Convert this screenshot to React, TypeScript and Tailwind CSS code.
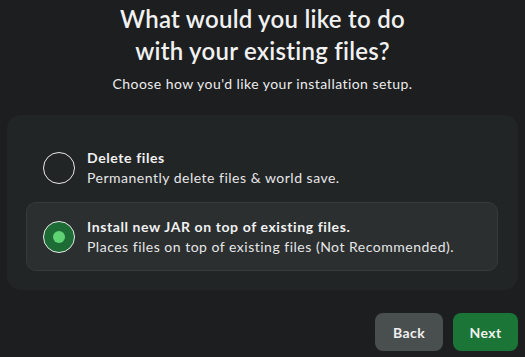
import React from 'react';

const options = [
  {
    id: 'delete',
    title: 'Delete files',
    desc: 'Permanently delete files & world save.',
  },
  {
    id: 'install',
    title: 'Install new JAR on top of existing files.',
    desc: 'Places files on top of existing files (Not Recommended).',
  },
];

export default function App() {
  const [selected, setSelected] = React.useState('install');

  return (
    <div
      className="h-[357px] w-[525px] bg-[#1c1e1f] text-[#f1f1f1] flex flex-col overflow-hidden"
      style={{ fontFamily: 'Lato, "Open Sans", sans-serif' }}
    >
      <div className="flex flex-col items-center pt-[3px]">
        <h1 className="text-[24px] leading-[32px] font-semibold text-center tracking-[0.25px]">
          What would you like to do
          <br />
          with your existing files?
        </h1>
        <p className="mt-[7px] text-[14px] leading-[20px] text-[#ececec] tracking-[0.45px]">
          Choose how you'd like your installation setup.
        </p>
      </div>

      <div className="mx-[7px] mt-[21px] h-[175px] rounded-[14px] bg-[#222526] pt-[18px] pl-[19px] pr-[20px] flex flex-col">
        {options.map((o) => {
          const active = selected === o.id;
          return (
            <button
              key={o.id}
              onClick={() => setSelected(o.id)}
              className={
                'h-[69px] flex items-center gap-[12px] pl-[16px] rounded-[10px] text-left border ' +
                (active ? 'bg-[#2b2f30] border-[#363a3b]' : 'border-transparent')
              }
            >
              <span
                className={
                  'w-[32px] h-[32px] rounded-full border-[1.5px] border-[#e8e8e8] flex items-center justify-center shrink-0 ' +
                  (active ? 'bg-[#1d6b35]' : '')
                }
              >
                {active && <span className="w-[12px] h-[12px] rounded-full bg-[#5fd374]" />}
              </span>
              <span className="flex flex-col">
                <span className="text-[14px] leading-[20px] font-bold tracking-[0.6px]">{o.title}</span>
                <span className="text-[14px] leading-[20px] text-[#e6e6e6] tracking-[0.5px]">{o.desc}</span>
              </span>
            </button>
          );
        })}
      </div>

      <div className="mt-[23px] flex justify-end gap-[10px] pr-[7px]">
        <button className="h-[38px] w-[68px] rounded-[8px] bg-[#494e4f] text-[14px] font-bold text-[#f0f0f0] tracking-[0.4px]">
          Back
        </button>
        <button className="h-[38px] w-[65px] rounded-[8px] bg-[#1a7536] text-[14px] font-bold text-[#f0f0f0] tracking-[0.4px]">
          Next
        </button>
      </div>
    </div>
  );
}
